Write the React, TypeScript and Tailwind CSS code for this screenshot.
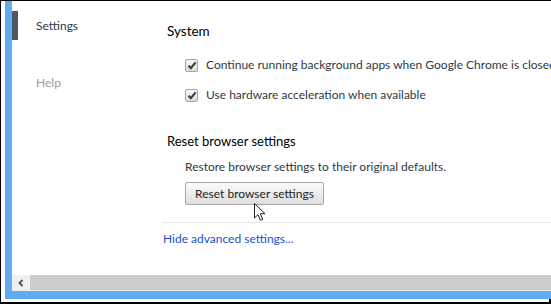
import React from "react";

function Checkbox() {
  return (
    <span className="flex items-center justify-center w-[13px] h-[13px] shrink-0 rounded-[2px] border border-[#a5a5a5] bg-gradient-to-b from-[#f6f6f6] to-[#dedede]">
      <svg width="10" height="9" viewBox="0 0 10 9">
        <path d="M1.5 4.8 L3.8 7.2 L8.6 1.4" fill="none" stroke="#3a3a3a" strokeWidth="2.1" />
      </svg>
    </span>
  );
}

function Cursor() {
  return (
    <svg className="absolute left-[253px] top-[202px]" width="14" height="20" viewBox="0 0 14 20">
      <path
        d="M0.5 0.5 L0.5 15 L4 11.6 L6.4 17.4 L8.7 16.4 L6.3 10.7 L11 10.7 Z"
        fill="#fff"
        stroke="#222"
        strokeWidth="1"
        strokeLinejoin="round"
      />
    </svg>
  );
}

export default function App() {
  return (
    <div
      className="relative w-[551px] h-[304px] bg-white border-t border-l border-r-2 border-b-2 border-black pl-[4px] pb-[3px] flex text-[12px]"
      style={{ fontFamily: 'Lato, "Noto Sans", sans-serif' }}
    >
      <div className="flex-1 flex bg-[#60aaf2] pl-[6px] pb-[7px]">
        <div className="flex-1 flex flex-col bg-white border-l border-b border-[#9aa5b0]">
          {/* page */}
          <div className="flex-1 flex min-h-0">
            {/* sidebar */}
            <div className="w-[150px] shrink-0 pt-[10px]">
              <div className="flex items-center h-[29px]">
                <span className="w-[6px] h-full bg-[#4e5764]" />
                <span className="ml-[18px] text-[#303942]">Settings</span>
              </div>
              <div className="ml-[24px] mt-[34px] text-[#999]">Help</div>
            </div>

            {/* content */}
            <div className="flex-1 min-w-0 overflow-hidden pt-[20px]">
              <h3 className="pl-[5px] text-[13.5px] text-black leading-[20px]">System</h3>
              <div className="pl-[23px] mt-[16px] flex flex-col gap-[14px]">
                <div className="flex items-center gap-[8px] h-[16px] whitespace-nowrap text-[#303942]">
                  <Checkbox />
                  <span>Continue running background apps when Google Chrome is closed</span>
                </div>
                <div className="flex items-center gap-[8px] h-[16px] whitespace-nowrap text-[#303942]">
                  <Checkbox />
                  <span>Use hardware acceleration when available</span>
                </div>
              </div>

              <h3 className="pl-[5px] mt-[28px] text-[13px] text-black leading-[20px]">
                Reset browser settings
              </h3>
              <p className="pl-[23px] mt-[7px] text-[#303942] leading-[18px]">
                Restore browser settings to their original defaults.
              </p>
              <div className="pl-[23px] mt-[6px]">
                <button className="w-[139px] h-[23px] whitespace-nowrap rounded-[2px] border border-[#a8a8a8] bg-gradient-to-b from-[#fbfbfb] to-[#dedede] text-[#222] text-[12px] leading-none">
                  Reset browser settings
                </button>
              </div>

              <div className="mt-[17px] border-t border-[#e8e8e8]" />
              <a className="block pl-[1px] mt-[7px] leading-[18px] text-[#1b4fd1]">Hide advanced settings...</a>
            </div>
          </div>

          {/* horizontal scrollbar */}
          <div className="h-[16px] flex bg-[#cdcdcd] border-b border-[#e6e6e6]">
            <div className="w-[18px] flex items-center justify-center bg-[#f0f0f0]">
              <svg width="8" height="8" viewBox="0 0 8 8">
                <path d="M5.5 1 L2.5 4 L5.5 7" fill="none" stroke="#505050" strokeWidth="1.8" />
              </svg>
            </div>
          </div>
        </div>
      </div>
      <Cursor />
    </div>
  );
}
